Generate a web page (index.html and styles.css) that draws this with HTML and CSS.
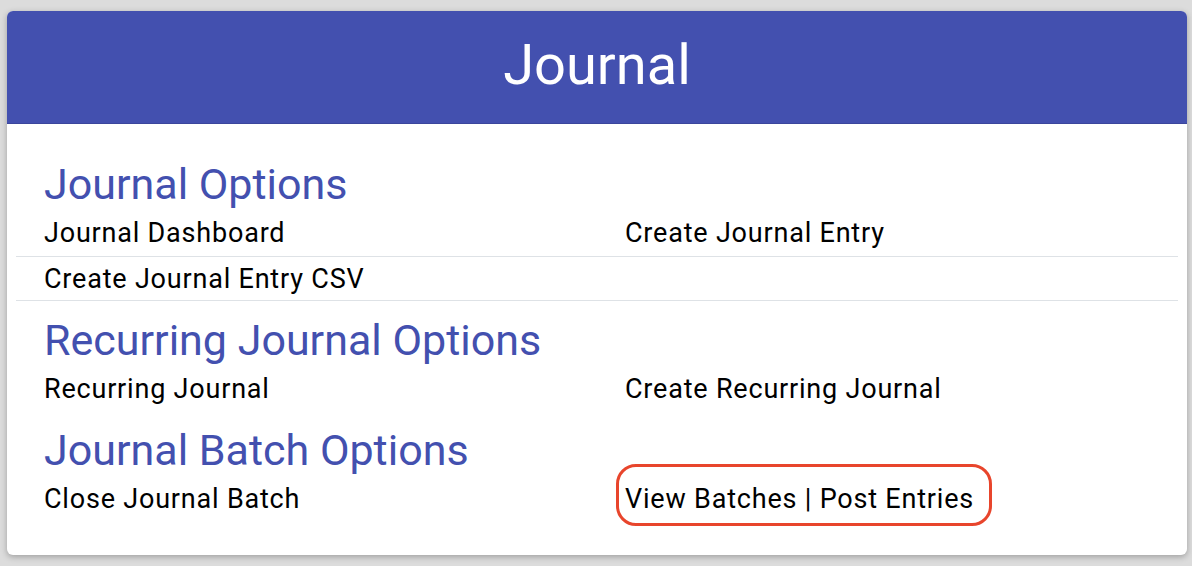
FILE: index.html
```html
<!DOCTYPE html>
<html lang="en">
<head>
<meta charset="utf-8">
<title>Journal</title>
<link rel="stylesheet" href="styles.css">
</head>
<body>
  <div class="card">
    <div class="card-header">Journal</div>
    <div class="card-body">
      <h2 class="section-title first">Journal Options</h2>
      <div class="row bordered">
        <a class="item">Journal Dashboard</a>
        <a class="item">Create Journal Entry</a>
      </div>
      <div class="row bordered">
        <a class="item">Create Journal Entry CSV</a>
      </div>
      <h2 class="section-title">Recurring Journal Options</h2>
      <div class="row">
        <a class="item">Recurring Journal</a>
        <a class="item">Create Recurring Journal</a>
      </div>
      <h2 class="section-title">Journal Batch Options</h2>
      <div class="row">
        <a class="item">Close Journal Batch</a>
        <a class="item"><span class="highlight">View Batches | Post Entries</span></a>
      </div>
    </div>
  </div>
</body>
</html>
```

FILE: styles.css
```css
* { box-sizing: border-box; }

html, body {
  margin: 0;
  padding: 0;
}

body {
  background: #dcdcdc;
  font-family: Roboto, "Noto Sans", Arial, sans-serif;
  padding: 11px 5px 11px 7px;
  height: 566px;
  overflow: hidden;
}

.card {
  background: #fff;
  border-radius: 6px;
  box-shadow: 0 2px 6px rgba(0, 0, 0, 0.28);
  overflow: hidden;
  height: 544px;
}

.card-header {
  background: #4350af;
  color: #fff;
  text-align: center;
  font-size: 56px;
  line-height: 67px;
  font-weight: 400;
  height: 113px;
  padding-top: 21px;
  border-bottom: 1px solid #3b469c;
}

.card-body {
  padding: 0 9px;
}

.section-title {
  margin: 14px 0 3px;
  padding-left: 28px;
  color: #4350af;
  font-size: 43px;
  line-height: 48px;
  font-weight: 400;
}

.section-title.first {
  margin-top: 36px;
}

.row.bordered + .section-title {
  margin-top: 15px;
}

.row {
  display: grid;
  grid-template-columns: 1fr 1fr;
}

.row.bordered {
  border-bottom: 1px solid #dee2e6;
}

.item {
  display: block;
  padding: 8px 28px 9px;
  font-size: 27px;
  letter-spacing: 0.8px;
  line-height: 28px;
  color: #000;
  white-space: nowrap;
}

.row.bordered + .row.bordered .item {
  padding-bottom: 7px;
}

.highlight {
  position: relative;
  display: inline-block;
}

.highlight::after {
  content: "";
  position: absolute;
  top: -21px;
  bottom: -13px;
  left: -9px;
  right: -18px;
  border: 3px solid #e8452c;
  border-radius: 20px;
}
```
